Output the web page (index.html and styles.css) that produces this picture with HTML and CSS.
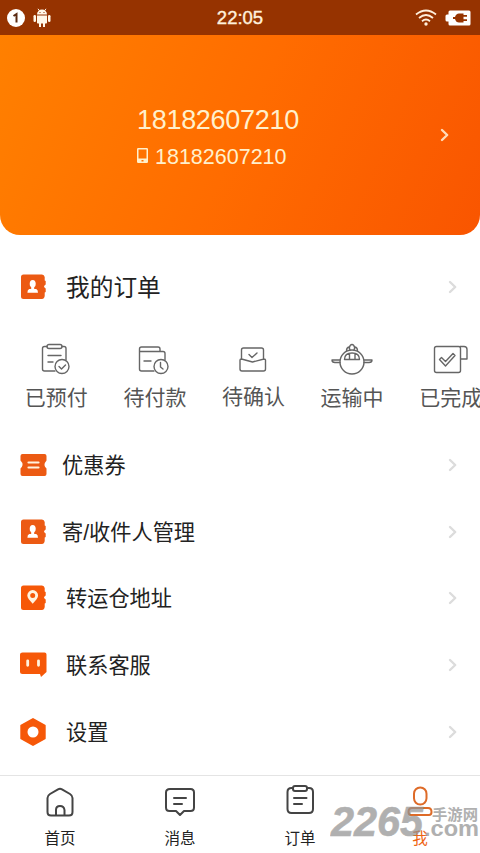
FILE: index.html
```html
<!DOCTYPE html>
<html lang="zh-CN">
<head>
<meta charset="utf-8">
<title>我</title>
<link rel="stylesheet" href="styles.css">
</head>
<body>
<svg class="defs" width="0" height="0" aria-hidden="true">
  <symbol id="chevron" viewBox="0 0 10 16"><path d="M2 3 7.200 8 2 13" fill="none" stroke="currentColor" stroke-width="2.400" stroke-linecap="round" stroke-linejoin="round"/></symbol>
  <symbol id="book" viewBox="0 0 30 30"><path d="M5.500 2.500H24q2.200 0 2.700 2.500v3.500l1 .5v3.500l-1 .7-.7 1.300.7 1.300 1 .7V20l-1 .5V24q-.5 3-2.700 3H5.500Q3 27 3 24.500V5q0-2.500 2.500-2.500z"/></symbol>
  <symbol id="contact" viewBox="0 0 30 30"><use href="#book" fill="#ec5a13"/><ellipse cx="14.700" cy="11.800" rx="3" ry="3.800" fill="#fff"/><path d="M13.200 14h3v3h2q1.800.5 1.800 3.700H9.400q0-3.200 1.800-3.700h2z" fill="#fff"/></symbol>
</svg>
<div class="screen">
  <header class="status">
    <div class="status-left">
      <svg width="18" height="18" viewBox="0 0 18 18"><circle cx="9" cy="9" r="9" fill="#fff"/><path d="M6.500 7 9.500 5v8.500" fill="none" stroke="#5a2a12" stroke-width="2"/></svg>
      <svg width="18" height="20" viewBox="0 0 18 20" fill="#fff8e8"><path d="M4 6.500a5 5 0 0 1 10 0zM4 7.500h10v7.200q0 .8-.8.800h-1.200V19h-2v-3.500H8V19H6v-3.500H4.800q-.8 0-.8-.800z"/><rect x=".5" y="7" width="2.500" height="7" rx="1.200"/><rect x="15" y="7" width="2.500" height="7" rx="1.200"/><path d="m5 .8 1.500 2M13 .8l-1.500 2" stroke="#fff8e8"/><path d="M6.500 4h1v1h-1zM10.500 4h1v1h-1z" fill="#963300"/></svg>
    </div>
    <time>22:05</time>
    <div class="status-right">
      <svg width="22" height="18" viewBox="0 0 22 18"><g fill="none" stroke="#fff0dc" stroke-width="1.800"><path d="M1 5.500q10-8 20 0M4 9q7-6 14 0M7 12.300q4-3.500 8 0"/></g><circle cx="11" cy="15" r="1.700" fill="#fff0dc"/></svg>
      <svg width="26" height="16" viewBox="0 0 26 16"><path d="M5 .5h19q1.500 0 1.500 1.500v12q0 1.500-1.500 1.500H5Q3.500 15.500 3.500 14v-2.500H2Q.5 11.500.5 10V6q0-1.500 1.500-1.500h1.500V2Q3.500.5 5 .5z" fill="#fff"/><path d="M8 7h2q1-3.500 4-3.500h4.500V5H22v1.800h-3.500v2.400H22V11h-3.500v1.500H14q-3 0-4-3.500H8z" fill="#963300"/></svg>
    </div>
  </header>
  <section class="profile">
    <div class="profile-info">
      <div class="name">18182607210</div>
      <div class="phone">
        <svg width="11" height="15" viewBox="0 0 11 15"><path fill-rule="evenodd" fill="#fff0cc" d="M1.200 0h8.600Q11 0 11 1.200v12.600Q11 15 9.800 15H1.200Q0 15 0 13.800V1.200Q0 0 1.200 0zM1.500 1.500v9h8v-9zM4.500 12v1.500h2V12z"/></svg>
        <span>18182607210</span>
      </div>
    </div>
    <svg class="profile-arrow" width="10" height="16"><use href="#chevron"/></svg>
  </section>
  <main>
    <div class="row orders">
      <svg width="30" height="30"><use href="#contact"/></svg>
      <span class="label">我的订单</span>
      <svg class="arrow" width="10" height="16"><use href="#chevron"/></svg>
    </div>
    <div class="states">
      <div class="state">
        <svg width="42" height="34" viewBox="0 0 42 34"><path d="M12 3.500H9.500Q7.500 3.500 7.500 5.500v20.500q0 2 2 2H20M27 3.500h2q2 0 2 2V17"/><rect x="12" y="1.500" width="15" height="4" rx="2"/><path d="M13 12.500h13M13 19h5"/><circle cx="27" cy="23.500" r="7"/><path d="m24 23.500 2.500 2.500 4-4"/></svg>
        <span>已预付</span>
      </div>
      <div class="state">
        <svg width="42" height="34" viewBox="0 0 42 34"><path d="M20 28H7.500q-2 0-2-2V6q0-2 2-2H24q2 0 2 2v2.500M5.500 8.500H29q2 0 2 2V17M10 18h7"/><circle cx="27" cy="23.500" r="7"/><path d="M26.500 19.500V24l2.500 2"/></svg>
        <span>待付款</span>
      </div>
      <div class="state raised">
        <svg width="42" height="34" viewBox="0 0 42 34"><path d="M9.500 16V7q0-2 2-2h18q2 0 2 2v9M9.500 16q-1.500 0-1.500 1v9q0 2 2 2h21.500q2 0 2-2v-9q0-1-1.500-1l-11.500 3zM17 11.500l3 3 5-4.500"/></svg>
        <span>待确认</span>
      </div>
      <div class="state">
        <svg width="42" height="34" viewBox="0 0 42 34"><circle cx="21" cy="19" r="12"/><path d="M13.500 16.500q0-6.500 7.500-6.500t7.500 6.500zM18.500 10.500v6M24 10.500v6M9 17H1q0 2.500 3 2.500h5M33 17h8q0 2.500-3 2.500h-5M15.500 8q0-3.500 2.500-4l1 3M26.500 8q0-3.500-2.500-4l-1 3M18.500 4.500q.5-3 2.500-3t2.500 3"/></svg>
        <span>运输中</span>
      </div>
      <div class="state">
        <svg width="42" height="34" viewBox="0 0 42 34"><rect x="4.500" y="3.500" width="26" height="26" rx="2"/><path d="M30 3.500h4q3 0 3 3v9.500h-6M9.500 16.500l2-2 4 4 7.500-8 2 2-9.500 10.500z"/></svg>
        <span>已完成</span>
      </div>
    </div>
    <nav class="menu">
      <div class="row tight">
        <svg width="30" height="30" viewBox="0 0 30 30"><path d="M4.500 4h22q2 0 2 2v4.500q-4 4.500 0 8V24q0 2-2 2h-22q-2 0-2-2v-5.500q4-4 0-8V6q0-2 2-2z" fill="#ec5a13"/><path d="M10.500 12.500h10M10.500 17.500h10" stroke="#fff3df" stroke-width="2.200" stroke-linecap="round"/></svg>
        <span class="label">优惠券</span>
        <svg class="arrow" width="10" height="16"><use href="#chevron"/></svg>
      </div>
      <div class="row tight">
        <svg width="30" height="30"><use href="#contact"/></svg>
        <span class="label">寄/收件人管理</span>
        <svg class="arrow" width="10" height="16"><use href="#chevron"/></svg>
      </div>
      <div class="row">
        <svg width="30" height="30" viewBox="0 0 30 30"><use href="#book" fill="#f65808"/><path fill="#fff3df" fill-rule="evenodd" d="M14.700 20.800 10.800 16.300Q9.300 14 9.300 12.500a5.400 5.400 0 0 1 10.800 0q0 1.500-1.500 3.800zM14.700 10a2.500 2.500 0 1 0 0 5 2.500 2.500 0 0 0 0-5z"/></svg>
        <span class="label">转运仓地址</span>
        <svg class="arrow" width="10" height="16"><use href="#chevron"/></svg>
      </div>
      <div class="row">
        <svg width="30" height="30" viewBox="0 0 30 30"><path d="M4.500 2.500h22q2 0 2 2V22L23 27l-1-3H4.500Q2 24 2 21.500v-17q0-2 2.500-2z" fill="#f65808"/><path d="M9.700 10.800v4.500M20.500 10.800v4.500" stroke="#fff3df" stroke-width="2.800" stroke-linecap="round"/></svg>
        <span class="label">联系客服</span>
        <svg class="arrow" width="10" height="16"><use href="#chevron"/></svg>
      </div>
      <div class="row">
        <svg width="30" height="30" viewBox="0 0 30 30"><path d="M15 2 26.700 8.500v13L15 28 3.300 21.500v-13z" fill="#f65808" stroke="#f65808" stroke-width="2" stroke-linejoin="round"/><circle cx="15" cy="15" r="5.500" fill="#fff"/></svg>
        <span class="label">设置</span>
        <svg class="arrow" width="10" height="16"><use href="#chevron"/></svg>
      </div>
    </nav>
  </main>
  <footer class="tabs">
    <div class="tab">
      <svg width="34" height="36" viewBox="0 0 34 36"><path d="M15 5.300q2-1 4 0l8 4.700q2.500 1.500 2.500 4V28q0 3.500-3.500 3.500H8q-3.500 0-3.500-3.500V14q0-2.500 2.500-4zM13 31v-5q0-4 4-4t4.500 4v5"/></svg>
      <span>首页</span>
    </div>
    <div class="tab">
      <svg width="34" height="36" viewBox="0 0 34 36"><path d="M7 5h20.500q3.500 0 3.500 3.500v15q0 3.500-3.500 3.500H21l-4 4-4-4H6.500Q3 27 3 23.500v-15Q3 5 7 5zM11 14h12M11 20h8"/></svg>
      <span>消息</span>
    </div>
    <div class="tab">
      <svg width="34" height="36" viewBox="0 0 34 36"><path d="M10 4H8.500Q4.500 4 4.500 8v17q0 4 4 4H26q4 0 4-4V8q0-4-4-4h-2M11 14h12.500M11 20h8"/><rect x="10" y="2" width="14" height="5" rx="2"/></svg>
      <span>订单</span>
    </div>
    <div class="tab active">
      <svg width="34" height="36" viewBox="0 0 34 36"><rect x="11" y="3.500" width="12.500" height="17" rx="6.200"/><path d="M9 24h16q3.500 0 3.500 4 0 3-2.500 3H8q-2.500 0-2.500-3 0-4 3.500-4z"/></svg>
      <span>我</span>
    </div>
    <div class="watermark">
      <svg width="150" height="40" viewBox="0 0 150 40">
        <text class="wm-num" x="1" y="35" textLength="92" lengthAdjust="spacingAndGlyphs">2265</text>
        <text class="wm-cn" x="102" y="18.500" textLength="46" lengthAdjust="spacingAndGlyphs">手游网</text>
        <text class="wm-com" x="94" y="35" textLength="55" lengthAdjust="spacingAndGlyphs">.com</text>
      </svg>
    </div>
  </footer>
</div>
</body>
</html>
```
FILE: styles.css
```css
* { box-sizing: border-box; }
body {
  margin: 0;
  background: #fff;
  color: #222;
  font-family: "Liberation Sans", "Noto Sans CJK SC", sans-serif;
}
.defs { position: absolute; }
svg { display: block; flex: none; }
.screen {
  width: 480px;
  height: 853px;
  display: flex;
  flex-direction: column;
  overflow: hidden;
}
.status {
  height: 35px;
  flex: none;
  display: grid;
  grid-template-columns: 1fr auto 1fr;
  align-items: center;
  padding: 0 9px 0 7px;
  background: #963300;
  color: #fff0dc;
}
.status time { font-size: 18.5px; -webkit-text-stroke: .4px; padding-left: 2px; }
.status-left, .status-right { display: flex; align-items: center; gap: 8px; }
.status-right { justify-content: flex-end; }
.profile {
  height: 200px;
  flex: none;
  display: flex;
  align-items: center;
  justify-content: space-between;
  padding: 0 30px 0 137px;
  background: linear-gradient(115deg, #ff8000 0%, #ff6c00 50%, #f95500 100%);
  border-radius: 0 0 20px 20px;
  color: #fff0cc;
}
.profile-info { display: flex; flex-direction: column; gap: 8px; padding-top: 3px; }
.name { font-size: 27px; line-height: 32px; letter-spacing: -.3px; }
.phone { display: flex; align-items: center; gap: 7px; font-size: 21.500px; line-height: 26px; }
.phone svg { margin-bottom: 3px; }
.profile-arrow { color: #ffdcb8; }
.row {
  height: 66.700px;
  display: flex;
  align-items: center;
  gap: 18px;
  padding: 0 22px 0 18px;
}
.row.tight { gap: 14px; }
.label { flex: 1; font-size: 21.200px; line-height: 30px; padding-top: 2px; }
.arrow { color: #dcdcdc; }
.orders { margin-top: 19px; }
.orders .label { font-size: 23.700px; }
.states {
  display: flex;
  height: 111px;
  padding: 22px 0 0 7px;
  overflow: hidden;
}
.state {
  width: 98.600px;
  flex: none;
  display: flex;
  flex-direction: column;
  align-items: center;
  gap: 6px;
  font-size: 21px;
  line-height: 30px;
  color: #555;
}
.raised { gap: 5px; }
.state svg { fill: none; stroke: #666; stroke-width: 1.400; stroke-linecap: round; stroke-linejoin: round; }
.tabs {
  position: relative;
  height: 78px;
  flex: none;
  margin-top: auto;
  display: flex;
  border-top: 1px solid #e4e4e4;
}
.tab {
  flex: 1;
  display: flex;
  flex-direction: column;
  align-items: center;
  gap: 8px;
  padding-top: 8px;
  font-size: 15.500px;
  line-height: 22px;
}
.tab svg { fill: none; stroke: #444; stroke-width: 2; stroke-linecap: round; stroke-linejoin: round; }
.tab.active { color: #ee6412; }
.tab.active svg { stroke: #de6b28; }
.watermark { position: absolute; left: 330px; top: 25px; opacity: .72; }
.watermark text { fill: #929292; font-weight: bold; }
.wm-num { font-size: 42px; font-style: italic; stroke: #929292; stroke-width: .6px; }
.wm-cn { font-size: 15px; }
.wm-com { font-size: 22px; }
```
